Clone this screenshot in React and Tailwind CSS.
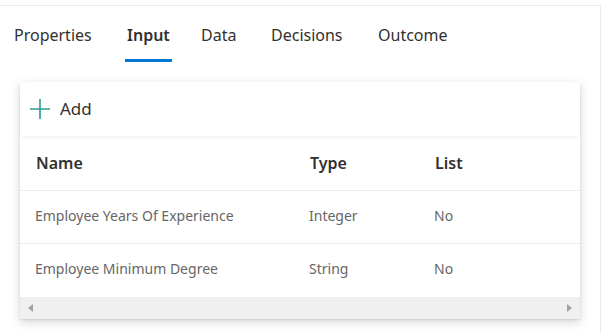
import { useState } from "react";

const tabs = [
  { label: "Properties", w: "w-[113px]" },
  { label: "Input", w: "w-[74px]" },
  { label: "Data", w: "w-[70px]" },
  { label: "Decisions", w: "w-[107px]" },
  { label: "Outcome", w: "w-[100px]" },
];

const rows = [
  { name: "Employee Years Of Experience", type: "Integer", list: "No" },
  { name: "Employee Minimum Degree", type: "String", list: "No" },
];

export default function App() {
  const [active, setActive] = useState("Input");

  return (
    <div className="h-[333px] bg-white font-['Noto_Sans',sans-serif] text-[#323130]">
      <div className="mt-[5px] h-[328px] w-[601px] border-t border-r border-[#ebebeb]">
        {/* tabs */}
        <div className="flex h-[56px] items-start pl-[12px] pt-[14px]">
          {tabs.map(tab => (
            <div key={tab.label} className={`${tab.w} shrink-0`}>
              <button
                onClick={() => setActive(tab.label)}
                className={`relative px-[2px] text-[16px] leading-[30px] ${
                  active === tab.label ? "font-semibold" : ""
                }`}
              >
                {tab.label}
                {active === tab.label && (
                  <span className="absolute left-0 right-0 top-[39px] h-[3px] bg-[#0078d4]" />
                )}
              </button>
            </div>
          ))}
        </div>

        {/* card */}
        <div className="ml-[20px] mt-[20px] w-[560px] bg-white shadow-[0_3px_10px_rgba(0,0,0,0.16),0_0.6px_1.8px_rgba(0,0,0,0.1)]">
          <div className="relative z-10 flex h-[54px] items-center gap-[10px] pl-[10px] shadow-[0_3px_4px_-2px_rgba(0,0,0,0.07)]">
            <svg width="20" height="20" viewBox="0 0 20 20" className="shrink-0">
              <path d="M10 0v20M0 10h20" stroke="#2a9d8f" strokeWidth="1.6" />
            </svg>
            <span className="text-[17px]">Add</span>
          </div>

          <div className="grid h-[55px] grid-cols-[274px_125px_1fr] items-center border-b border-[#edebe9] pl-[16px] text-[16px] font-semibold">
            <span>Name</span>
            <span>Type</span>
            <span>List</span>
          </div>

          {rows.map((row, i) => (
            <div
              key={row.name}
              className={`grid h-[53px] grid-cols-[274px_125px_1fr] items-center pb-[4px] pl-[15px] text-[14px] text-[#666666] ${
                i === 0 ? "border-b border-[#edebe9]" : ""
              }`}
            >
              <span>{row.name}</span>
              <span>{row.type}</span>
              <span>{row.list}</span>
            </div>
          ))}

          {/* horizontal scrollbar */}
          <div className="flex h-[22px] items-center justify-between bg-[#f0f0f0] px-[8px]">
            <svg width="5" height="8" viewBox="0 0 5 8">
              <path d="M5 0v8L0 4z" fill="#a3a3a3" />
            </svg>
            <svg width="5" height="8" viewBox="0 0 5 8">
              <path d="M0 0v8l5-4z" fill="#a3a3a3" />
            </svg>
          </div>
        </div>
      </div>
    </div>
  );
}
